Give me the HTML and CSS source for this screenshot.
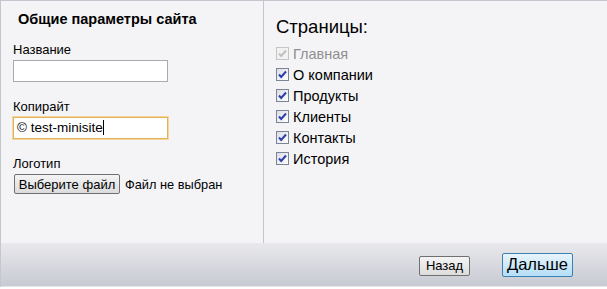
FILE: index.html
```html
<!DOCTYPE html>
<html lang="ru">
  <head>
    <meta charset="UTF-8" />
    <title>Общие параметры сайта</title>
    <link rel="stylesheet" href="styles.css">
  </head>
  <body>
    <div class="wizard">
      <div class="panes">
        <div class="pane pane-left">
          <h3 class="title">Общие параметры сайта</h3>
          <div class="field">
            <label class="label">Название</label>
            <input type="text" class="input" />
          </div>
          <div class="field">
            <label class="label">Копирайт</label>
            <div class="input input-focus">© test-minisite<span class="caret"></span></div>
          </div>
          <div class="field">
            <label class="label">Логотип</label>
            <div class="file-row">
              <span class="btn btn-file">Выберите файл</span>
              <span class="file-name">Файл не выбран</span>
            </div>
          </div>
        </div>
        <div class="pane pane-right">
          <h2 class="pages-title">Страницы:</h2>
          <ul class="pages">
            <li class="page disabled"><span class="check"><svg viewBox="0 0 11 11"><path d="M2 5.5 L4.2 8 L9 2.5" /></svg></span>Главная</li>
            <li class="page"><span class="check"><svg viewBox="0 0 11 11"><path d="M2 5.5 L4.2 8 L9 2.5" /></svg></span>О компании</li>
            <li class="page"><span class="check"><svg viewBox="0 0 11 11"><path d="M2 5.5 L4.2 8 L9 2.5" /></svg></span>Продукты</li>
            <li class="page"><span class="check"><svg viewBox="0 0 11 11"><path d="M2 5.5 L4.2 8 L9 2.5" /></svg></span>Клиенты</li>
            <li class="page"><span class="check"><svg viewBox="0 0 11 11"><path d="M2 5.5 L4.2 8 L9 2.5" /></svg></span>Контакты</li>
            <li class="page"><span class="check"><svg viewBox="0 0 11 11"><path d="M2 5.5 L4.2 8 L9 2.5" /></svg></span>История</li>
          </ul>
        </div>
      </div>
      <div class="footer">
        <span class="btn btn-back">Назад</span>
        <span class="btn btn-next">Дальше</span>
      </div>
    </div>
  </body>
</html>
```

FILE: styles.css
```css
:root {
  --bg: #f4f4f7;
  --line: #c6c6ce;
  --text: #000;
}

body {
  margin: 0;
  font-family: "Liberation Sans", Arial, sans-serif;
  color: var(--text);
  background: #fff;
}

.wizard {
  width: 607px;
  height: 287px;
  box-sizing: border-box;
  border-top: 1px solid var(--line);
  border-left: 1px solid var(--line);
  background: var(--bg);
  display: flex;
  flex-direction: column;
}

.panes {
  display: flex;
  flex: 1;
}

.pane-left {
  width: 263px;
  border-right: 1px solid var(--line);
  padding: 0 0 0 12px;
  box-sizing: border-box;
}

.pane-right {
  flex: 1;
  padding: 0 0 0 12px;
}

.title {
  margin: 10px 0 15px 5px;
  font-size: 14.5px;
  line-height: 16px;
  font-weight: 700;
}

.field {
  margin-bottom: 17px;
}

.label {
  display: block;
  font-size: 13px;
  line-height: 15px;
  margin-bottom: 3px;
}

.input {
  display: block;
  width: 155px;
  height: 22px;
  box-sizing: border-box;
  margin: 0;
  border: 1px solid #a9a9b0;
  background: #fff;
  font-family: inherit;
  font-size: 13.5px;
  padding: 0 4px;
  outline: none;
}

.input-focus {
  border: 1px solid #e0b35a;
  box-shadow: 0 0 0 1px #f3d79f;
  line-height: 20px;
  padding-left: 3px;
}

.caret {
  display: inline-block;
  width: 1px;
  height: 15px;
  background: #000;
  vertical-align: -3px;
}

.file-row {
  display: flex;
  align-items: center;
  gap: 5px;
  margin-left: 1px;
}

.btn {
  display: inline-flex;
  align-items: center;
  justify-content: center;
  box-sizing: border-box;
  border: 1px solid #707070;
  border-radius: 2px;
  background: linear-gradient(#f4f4f4, #dcdcdc);
  font-size: 13px;
}

.btn-file {
  width: 106px;
  height: 20px;
}

.file-name {
  font-size: 12.8px;
}

.pages-title {
  margin: 16px 0 6px 0;
  font-size: 18.5px;
  line-height: 20px;
  font-weight: 400;
}

.pages {
  list-style: none;
  margin: 0;
  padding: 0;
}

.page {
  display: flex;
  align-items: center;
  height: 21px;
  font-size: 14.5px;
}

.check {
  width: 13px;
  height: 13px;
  box-sizing: border-box;
  border: 1px solid #7a8597;
  background: linear-gradient(135deg, #dcdce6, #fff);
  margin-right: 4px;
  display: flex;
}

.check svg {
  width: 11px;
  height: 11px;
  fill: none;
  stroke: #2b3fa8;
  stroke-width: 2;
}

.page.disabled {
  color: #8f8f8f;
}

.page.disabled .check {
  border-color: #c4c4c4;
  background: #f2f2f2;
}

.page.disabled .check svg {
  stroke: #c0c0c0;
}

.footer {
  height: 43px;
  border-bottom: 1px solid #e6e6ea;
  background: linear-gradient(#e9e9ec, #c8cad3);
  display: flex;
  align-items: center;
  justify-content: flex-end;
  gap: 32px;
  padding-right: 34px;
}

.btn-back {
  width: 51px;
  height: 20px;
  margin-top: 2px;
}

.btn-next {
  width: 71px;
  height: 24px;
  font-size: 16.5px;
  border: 1px solid #3c7fb1;
  background: linear-gradient(#e7f4fb, #b4def8);
}
```
